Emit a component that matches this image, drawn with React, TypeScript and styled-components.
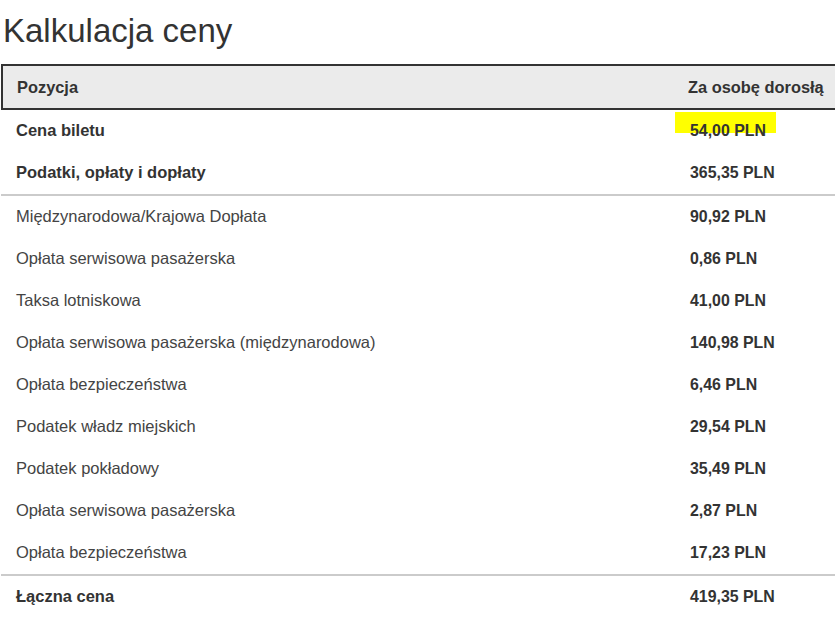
import React from "react";
import styled, { createGlobalStyle } from "styled-components";

const Global = createGlobalStyle`
  html, body { margin: 0; padding: 0; background: #fff; overflow: hidden; }
  body { font-family: "Liberation Sans", Arial, sans-serif; }
`;

const Page = styled.div`
  width: 845px;
  padding-top: 9px;
`;

const Title = styled.h1`
  margin: 0 0 0 3px;
  font-weight: 400;
  font-size: 33px;
  line-height: 44px;
  color: #333;
  height: 55px;
`;

const Table = styled.div`
  display: flex;
  flex-direction: column;
  margin-left: 1px;
`;

const HeaderRow = styled.div`
  display: grid;
  grid-template-columns: 1fr 155px;
  height: 42px;
  align-items: center;
  background: #ebebeb;
  border: 2px solid #333;
  padding-left: 14px;
  font-weight: 700;
  font-size: 16.4px;
  color: #333;
`;

const Row = styled.div<{ $bold?: boolean }>`
  display: grid;
  grid-template-columns: 1fr 155px;
  height: 42px;
  align-items: center;
  padding-left: 15px;
  padding-bottom: 1px;
  box-sizing: border-box;
  font-size: 16.5px;
  font-weight: ${(p) => (p.$bold ? 700 : 400)};
  color: ${(p) => (p.$bold ? "#333" : "#444")};
`;

const Value = styled.div`
  font-weight: 700;
  color: #333;
  font-size: 15.9px;
`;

const Divider = styled.div`
  height: 2px;
  background: #cbcbcb;
`;

const Marked = styled.span`
  position: relative;
  z-index: 0;
  &::before {
    content: "";
    position: absolute;
    z-index: -1;
    left: -15px;
    top: -10px;
    width: 101px;
    height: 21px;
    background: #ffff00;
  }
`;

const items: [string, string][] = [
  ["Międzynarodowa/Krajowa Dopłata", "90,92 PLN"],
  ["Opłata serwisowa pasażerska", "0,86 PLN"],
  ["Taksa lotniskowa", "41,00 PLN"],
  ["Opłata serwisowa pasażerska (międzynarodowa)", "140,98 PLN"],
  ["Opłata bezpieczeństwa", "6,46 PLN"],
  ["Podatek władz miejskich", "29,54 PLN"],
  ["Podatek pokładowy", "35,49 PLN"],
  ["Opłata serwisowa pasażerska", "2,87 PLN"],
  ["Opłata bezpieczeństwa", "17,23 PLN"],
];

export default function App() {
  return (
    <Page>
      <Global />
      <Title>Kalkulacja ceny</Title>
      <Table>
        <HeaderRow>
          <div>Pozycja</div>
          <div>Za osobę dorosłą</div>
        </HeaderRow>
        <Row $bold>
          <div>Cena biletu</div>
          <Value>
            <Marked>54,00 PLN</Marked>
          </Value>
        </Row>
        <Row $bold>
          <div>Podatki, opłaty i dopłaty</div>
          <Value>365,35 PLN</Value>
        </Row>
        <Divider />
        {items.map(([label, value], i) => (
          <Row key={i}>
            <div>{label}</div>
            <Value>{value}</Value>
          </Row>
        ))}
        <Divider />
        <Row $bold>
          <div>Łączna cena</div>
          <Value>419,35 PLN</Value>
        </Row>
      </Table>
    </Page>
  );
}
